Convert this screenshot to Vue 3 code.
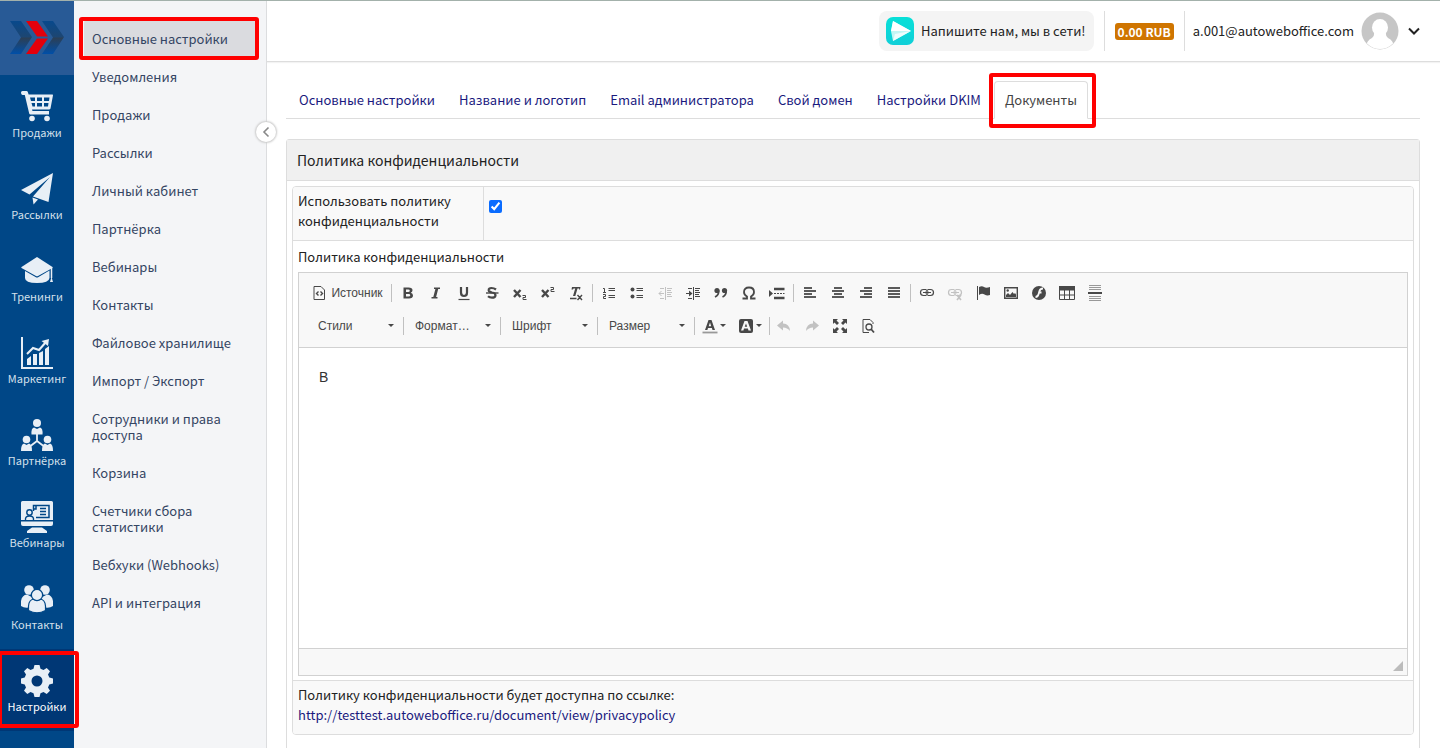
<script setup>
import { ref } from 'vue'

const agree = ref(true)
const content = ref('В')
const current = ref('Основные настройки')

const rail = [
  { label: 'Продажи', icon: 'cart' },
  { label: 'Рассылки', icon: 'plane' },
  { label: 'Тренинги', icon: 'cap' },
  { label: 'Маркетинг', icon: 'chart' },
  { label: 'Партнёрка', icon: 'team' },
  { label: 'Вебинары', icon: 'screen' },
  { label: 'Контакты', icon: 'people' },
  { label: 'Настройки', icon: 'gear', active: true }
]

const menu = [
  'Основные настройки', 'Уведомления', 'Продажи', 'Рассылки', 'Личный кабинет',
  'Партнёрка', 'Вебинары', 'Контакты', 'Файловое хранилище', 'Импорт / Экспорт',
  'Сотрудники и права доступа', 'Корзина', 'Счетчики сбора статистики',
  'Вебхуки (Webhooks)', 'API и интеграция'
]

const tabs = ['Основные настройки', 'Название и логотип', 'Email администратора', 'Свой домен', 'Настройки DKIM', 'Документы']

const K = '#484848'
const f = (d) => `<path d="${d}" fill="${K}"/>`
const s = (d, w = 1) => `<path d="${d}" fill="none" stroke="${K}" stroke-width="${w}"/>`

const railIcons = {
  cart: '<path d="M0 1.5Q0 0 1.500 0H5.500Q6.500 0 6.800 1L7.600 3.500H31.500Q32 3.500 32 4.200L29.500 17.500Q29.200 18.500 28 18.500H11L11.500 20H28V23.500H9.500Q8.500 23.500 8.200 22.500L3.800 4H1.500Q0 3.500 0 1.500Z"/><path d="M9 6.500H14V10H10ZM16 6.500H21V10H16ZM23 6.500H28.500L28 10H23ZM10.500 12H14V15.500H11.500ZM16 12H21V15.500H16ZM23 12H27.500L27 15.500H23Z" fill="#004787"/><circle cx="11" cy="27.500" r="2.800"/><circle cx="26" cy="27.500" r="2.800"/>',
  plane: '<path d="M32 0L0 17L8.500 21.500L29 4L12 23.500L27.500 29Z"/><path d="M11.500 24.500L17 26.500L12.500 31.500Z"/>',
  cap: '<path d="M16 2L31.500 12Q32 12.500 31.500 13L17 21Q16 21.500 15 21L0.500 13Q0 12.500 0.500 12Z"/><path d="M4 16L14.500 22Q16 23 17.500 22L28.500 15.500V23Q28 28 16 28T4 23Z"/><path d="M30.500 13V23" stroke="#e8eff6" stroke-width="1.500"/><path d="M30.500 22L32 27H29Z"/>',
  chart: '<path d="M0 0H2V30H32V32H0Z"/><path d="M6 22L10 19V28H6ZM12 17L16 17V28H12ZM18 16L22 14V28H18ZM24 12L28 9V28H24Z"/><path d="M6 17L12 11L18 13L25 5" fill="none" stroke="#e8eff6" stroke-width="2"/><path d="M20.500 4L28 2L27 9Z"/>',
  team: '<circle cx="16" cy="4" r="4"/><path d="M10.500 15.500Q10 9 13 8.500L16 10L19 8.500Q22 9 21.500 15.500Z"/><circle cx="5.500" cy="20.500" r="3.800"/><circle cx="26.500" cy="20.500" r="3.800"/><path d="M0 32Q0 25 3 24.500L5.500 26L8 24.500Q11 25 11 32ZM21 32Q21 25 24 24.500L26.500 26L29 24.500Q32 25 32 32Z"/><path d="M16 15V22L9.500 27M16 22L22.500 27" fill="none" stroke="#e8eff6" stroke-width="1.800"/>',
  screen: '<path d="M1.500 0H30.500Q32 0 32 1.500V19H0V1.500Q0 0 1.500 0ZM0 20.500H32V23Q32 25 30 25H2Q0 25 0 23ZM11 26.500H21L26 30V32H6V30Z"/><path d="M12.500 10V4.500H28V16.500H15M19 7.500H25M19 10.500H25M19 13.500H25M12.500 8H15V4.500" fill="none" stroke="#004787" stroke-width="1.500"/><circle cx="8.500" cy="11.500" r="2.700" fill="none" stroke="#004787" stroke-width="1.400"/><path d="M4.500 19Q4 15 8.500 15T12.500 19" fill="none" stroke="#004787" stroke-width="1.400"/>',
  people: '<circle cx="8" cy="7" r="4.800"/><circle cx="24" cy="7" r="4.800"/><path d="M0 23V18Q1 12 6 11.500L16 17L26 11.500Q31 12 32 18V23Q28 26 22 24H10Q4 26 0 23Z"/><g stroke="#004787" stroke-width="1.200"><path d="M7.500 27.500V23Q8 16.500 13 16H19Q24 16.500 24.500 23V27.500Q16 32 7.500 27.500Z"/><circle cx="16" cy="12" r="5.600"/></g>',
  gear: '<path fill-rule="evenodd" d="M13.500 0H18.500L19.500 3.800L22.500 5L25.700 3L29 6.300L27 9.500L28.300 12.500L32 13.500V18.500L28.300 19.500L27 22.500L29 25.700L25.700 29L22.500 27L19.500 28.300L18.500 32H13.500L12.500 28.300L9.500 27L6.300 29L3 25.700L5 22.500L3.700 19.500L0 18.500V13.500L3.700 12.500L5 9.500L3 6.300L6.300 3L9.500 5L12.500 3.800ZM16 10.500A5.500 5.500 0 1 0 16 21.500A5.500 5.500 0 1 0 16 10.500Z"/>'
}

const lines = (rows, w = 2) => rows.map(([x, y, l]) => `<path d="M${x} ${y}h${l}" stroke="${K}" stroke-width="${w}"/>`).join('')

const chain = s('M7 4.500H4.500Q1.500 4.500 1.500 7.500T4.500 10.500H7M9 4.500H11.500Q14.500 4.500 14.500 7.500T11.500 10.500H9M4 7.500H12', 1.2) + s('M7.500 4.500Q9 5 9 7.500T7.500 10.500M8.500 4.500Q7 5 7 7.500T8.500 10.500')

const icons = {
  source: s('M3 1.500H10L13.500 5V14.500H3Z') + s('M7.500 6.500L5.500 8.500L7.500 10.500M9.500 6.500L11.500 8.500L9.500 10.500', 1.4),
  bold: `<path fill-rule="evenodd" fill="${K}" d="M3.500 2.500H8.500Q12.500 2.500 12.500 5.300Q12.500 7.200 10.800 7.800Q13 8.300 13 10.500Q13 13.500 9 13.500H3.500ZM6 4.500V7H8Q9.800 7 9.800 5.700T8 4.500ZM6 9V11.500H8.300Q10.300 11.500 10.300 10.200T8.300 9Z"/>`,
  italic: f('M6 2.500H12V4H10.200L8.100 12H9.500V13.500H3.500V12H5.300L7.400 4H6Z'),
  underline: s('M5 2V7.500Q5 11 8 11T11 7.500V2', 2.2) + s('M2.500 14.500H13.500', 1.2),
  strike: s('M12 4.500Q10 3 7.500 3Q4.500 3 4.700 5.200Q5 7 8 7.500Q11.500 8 11.500 10.300Q11.300 12.700 8 12.700Q5.500 12.700 4 11.300', 2.2) + s('M2 8H14.500', 1.4),
  sub: s('M2 5L8.500 12M8.500 5L2 12', 2.4) + s('M10.500 10.500H13.500V12.500H11V14.500H14.500'),
  sup: s('M2 5L8.500 12M8.500 5L2 12', 2.4) + s('M10.500 2.500H13.500V4.500H11V6.500H14.500'),
  clear: f('M4 2H12.500L12 4.500H11L11.200 3.500H9.500L7.300 11H5L7.200 3.500H5.500L5 4.500H3.500Z') + s('M2 13.500H8.500M9.500 10L14 15M14 10L9.500 15', 1.4),
  numbered: s('M2 3.500H3.500V7M2 7.500H5M2 9.500H4.500V11.500H2.500V13.500H5M7.500 3.500H14M7.500 5.500H14M7.500 10.500H14M7.500 12.500H14'),
  bullets: `<circle cx="3.500" cy="4.500" r="2" fill="${K}"/><circle cx="3.500" cy="11.500" r="2" fill="${K}"/>` + s('M7.500 3.500H14M7.500 5.500H14M7.500 10.500H14M7.500 12.500H14'),
  outdent: s('M8.500 2V15M10 3.500H15M10 5.500H14M10 7.500H15M10 9.500H14M10 11.500H15M3 3.500H7M3 13.500H7M2 8.500H7M4.500 6L2 8.500L4.500 11'),
  indent: s('M8.500 2V15M10 3.500H15M10 5.500H14M10 7.500H15M10 9.500H14M10 11.500H15M3 3.500H7M3 13.500H7M1 8.500H6.500') + f('M4 5.500L7.500 8.500L4 11.500Z'),
  quote: `<g fill="${K}"><circle cx="4" cy="5.500" r="2.600"/><circle cx="11.500" cy="5.500" r="2.600"/></g>` + s('M5.700 5.500Q6 10 2 12M13.200 5.500Q13.500 10 9.500 12', 1.7),
  omega: s('M1.500 13.500H6V11.500Q3 10 3 7Q3 2.500 8 2.500T13 7Q13 10 10 11.500V13.500H14.500', 1.8),
  pagebreak: f('M0 5L4 8.500L0 12Z') + s('M5 4H15.500M5 13H15.500', 2.4) + s('M5 8.500H7M8 8.500H10M11 8.500H13M14 8.500H15.500'),
  left: lines([[2, 3, 8], [2, 6, 12], [2, 9, 8], [2, 12, 12]], 1.8),
  center: lines([[4, 3, 8], [2, 6, 12], [4, 9, 8], [2, 12, 12]], 1.8),
  right: lines([[6, 3, 8], [2, 6, 12], [6, 9, 8], [2, 12, 12]], 1.8),
  justify: lines([[2, 3, 12], [2, 6, 12], [2, 9, 12], [2, 12, 12]], 1.8),
  link: chain,
  unlink: chain + s('M10 10L14 15M14 10L10 15', 1.6),
  flag: s('M2.500 1V15') + f('M4 2Q7 0.500 9 2T15 2V10Q12 11 9.500 9.500T4 10Z'),
  image: s('M1.700 2.700H14.300V13.300H1.700Z', 1.4) + f('M3 12V10L5 8L7 10L9.500 7L11 9L12 8L13 9.500V12Z') + `<circle cx="4.700" cy="5.500" r="1.200" fill="${K}"/>`,
  flash: `<circle cx="8" cy="8" r="7" fill="${K}"/><path d="M12 3.500Q9 3.500 8.300 6.500L7.800 8.500Q7 12 4.500 12M7.500 7.500H10.500" fill="none" stroke="#f8f8f8" stroke-width="1.800"/>`,
  table: s('M0.500 2.500H15.500V14.500H0.500ZM5.500 5V14M10.500 5V14M1 10H15') + f('M0 1H16V5.500H0Z'),
  rule: `<path d="M2 0.500H14M2 2.500H14M2 4.500H14M2 11.500H14M2 13.500H14M2 15.500H14" stroke="#999" fill="none"/>` + s('M1 8H15', 2),
  undo: f('M1 7.500L7 2.500V5.500Q13.500 5.500 14 13Q11.500 9.500 7 9.500V12.500Z'),
  redo: f('M15 7.500L9 2.500V5.500Q2.500 5.500 2 13Q4.500 9.500 9 9.500V12.500Z'),
  maximize: f('M1 1H6L4.500 2.500L7 5L5 7L2.500 4.500L1 6ZM15 1V6L13.500 4.500L11 7L9 5L11.500 2.500L10 1ZM1 15V10L2.500 11.500L5 9L7 11L4.500 13.500L6 15ZM15 15H10L11.500 13.500L9 11L11 9L13.500 11.500L15 10Z'),
  preview: s('M13 6V4.500L10 1.500H3V14.500H9') + `<circle cx="9" cy="9" r="3" fill="none" stroke="${K}" stroke-width="1.300"/>` + s('M11 11L14 14.500', 1.8),
  color: f('M6.500 2H9.500L13 12H10.500L9.900 10H6L5.400 12H3ZM8 4.500L6.700 8.200H9.200Z') + '<path d="M0.500 14.500H15.500" stroke="#999" stroke-width="1.800"/>',
  bgcolor: `<rect x="1" y="1" width="14" height="14" rx="2" fill="${K}"/><path fill="#f8f8f8" fill-rule="evenodd" d="M6.500 3H9.500L13 12.500H10.500L9.900 10.500H6L5.400 12.500H3ZM8 5.500L6.700 8.700H9.200Z"/>`
}

const groups = [
  [['bold', 'Полужирный'], ['italic', 'Курсив'], ['underline', 'Подчеркнутый'], ['strike', 'Зачеркнутый'], ['sub', 'Подстрочный индекс'], ['sup', 'Надстрочный индекс'], ['clear', 'Убрать форматирование']],
  [['numbered', 'Нумерованный список'], ['bullets', 'Маркированный список'], ['outdent', 'Уменьшить отступ', true], ['indent', 'Увеличить отступ'], ['quote', 'Цитата'], ['omega', 'Специальный символ'], ['pagebreak', 'Разрыв страницы']],
  [['left', 'По левому краю'], ['center', 'По центру'], ['right', 'По правому краю'], ['justify', 'По ширине']],
  [['link', 'Ссылка'], ['unlink', 'Убрать ссылку', true], ['flag', 'Якорь'], ['image', 'Изображение'], ['flash', 'Flash'], ['table', 'Таблица'], ['rule', 'Горизонтальная линия']]
]

const combos = ['Стили', 'Формат…', 'Шрифт', 'Размер']
const tail = [['undo', 'Отменить', true], ['redo', 'Повторить', true], ['maximize', 'Развернуть'], ['preview', 'Предпросмотр']]
</script>

<template>
  <div class="app">
    <nav class="rail">
      <a href="#" class="logo" aria-label="Главная">
        <svg width="54" height="34" viewBox="0 0 54 34">
          <defs>
            <linearGradient id="blade" x1="0" y1="0" x2="0" y2="1">
              <stop offset="0" stop-color="#08498c" />
              <stop offset="0.48" stop-color="#1d4672" />
              <stop offset="0.52" stop-color="#2b3f56" />
              <stop offset="1" stop-color="#004fa8" />
            </linearGradient>
          </defs>
          <path d="M0 0H11L22 16L11 33H0L11 16.500Z" fill="url(#blade)" />
          <path d="M32 0H43L54 16L43 33H32L43 16.500Z" fill="url(#blade)" />
          <path d="M16 0H27L38 15.500H27ZM27 17.500H38L27 33H16Z" fill="#e3000b" />
        </svg>
      </a>
      <a v-for="r in rail" :key="r.label" href="#" class="rail-item" :class="{ active: r.active }">
        <svg width="32" height="32" viewBox="0 0 32 32" fill="#e8eff6" v-html="railIcons[r.icon]"></svg>
        <span>{{ r.label }}</span>
        <i v-if="r.active" class="mark mark-rail"></i>
      </a>
    </nav>

    <aside class="side">
      <a v-for="m in menu" :key="m" href="#" class="side-item" :class="{ active: m === current }" @click.prevent="current = m">
        {{ m }}
        <i v-if="m === menu[0]" class="mark mark-side"></i>
      </a>
      <button class="fold" aria-label="Свернуть меню">
        <svg width="8" height="12" viewBox="0 0 8 12"><path d="M6.500 1.500L2 6L6.500 10.500" fill="none" stroke="#888" stroke-width="1.600" /></svg>
      </button>
    </aside>

    <div class="main">
      <header class="top">
        <button class="chat">
          <svg width="28" height="28" viewBox="0 0 28 28">
            <defs>
              <linearGradient id="aqua" x1="0" y1="0" x2="0" y2="1"><stop offset="0" stop-color="#08e0d8" /><stop offset="1" stop-color="#10cfd8" /></linearGradient>
            </defs>
            <rect width="28" height="28" rx="7" fill="url(#aqua)" />
            <path d="M7 4L25 14L7 24L5 14Z" fill="#c4f6f4" />
            <path d="M7 4L25 14L5 14Z" fill="#fff" />
            <path d="M7 24L25 14L9 17Z" fill="#effdfd" />
          </svg>
          <span>Напишите нам, мы в сети!</span>
        </button>
        <div class="balance"><a href="#" class="badge">0.00 RUB</a></div>
        <button class="user">
          <span>a.001@autoweboffice.com</span>
          <svg class="avatar" width="38" height="38" viewBox="0 0 38 38">
            <defs><clipPath id="face"><circle cx="19" cy="19" r="18" /></clipPath></defs>
            <circle cx="19" cy="19" r="18.500" fill="#c6c6c6" />
            <g clip-path="url(#face)" fill="#fff">
              <ellipse cx="19" cy="15.500" rx="8" ry="8.500" />
              <path d="M13 18H25Q24 24 27 26Q33 28 33 38H5Q5 28 11 26Q14 24 13 18Z" />
            </g>
          </svg>
          <svg width="12" height="8" viewBox="0 0 12 8"><path d="M1 1.500L6 6.500L11 1.500" fill="none" stroke="#222" stroke-width="2" /></svg>
        </button>
      </header>

      <main class="page">
        <nav class="tabs">
          <a v-for="(t, i) in tabs" :key="t" href="#" class="tab" :class="{ active: i === 5 }">
            {{ t }}
            <i v-if="i === 5" class="mark mark-tab"></i>
          </a>
        </nav>

        <section class="panel">
          <h1>Политика конфиденциальности</h1>
          <div class="sheet">
            <div class="row row-check">
              <label for="agree">Использовать политику конфиденциальности</label>
              <div class="cell"><input id="agree" v-model="agree" type="checkbox" /></div>
            </div>
            <div class="row row-editor">
              <label for="policy">Политика конфиденциальности</label>
              <div class="editor">
                <div class="toolbar">
                  <div class="line">
                    <button class="tool source"><svg width="16" height="16" viewBox="0 0 16 16" v-html="icons.source"></svg>Источник</button>
                    <template v-for="(g, i) in groups" :key="i">
                      <span class="sep"></span>
                      <button v-for="b in g" :key="b[0]" class="tool" :disabled="b[2]" :aria-label="b[1]">
                        <svg width="16" height="16" viewBox="0 0 16 16" v-html="icons[b[0]]"></svg>
                      </button>
                    </template>
                  </div>
                  <div class="line second">
                    <template v-for="c in combos" :key="c">
                      <span class="combo">
                        <select :aria-label="c"><option>{{ c }}</option></select>
                        <span class="caret"></span>
                      </span>
                      <span class="sep"></span>
                    </template>
                    <button class="tool drop" aria-label="Цвет текста"><svg width="16" height="16" viewBox="0 0 16 16" v-html="icons.color"></svg><span class="caret"></span></button>
                    <button class="tool drop" aria-label="Цвет фона"><svg width="16" height="16" viewBox="0 0 16 16" v-html="icons.bgcolor"></svg><span class="caret"></span></button>
                    <span class="sep"></span>
                    <button v-for="b in tail" :key="b[0]" class="tool" :disabled="b[2]" :aria-label="b[1]">
                      <svg width="16" height="16" viewBox="0 0 16 16" v-html="icons[b[0]]"></svg>
                    </button>
                  </div>
                </div>
                <textarea id="policy" v-model="content"></textarea>
                <div class="foot"><span class="grip"></span></div>
              </div>
            </div>
            <div class="row row-link">
              Политику конфиденциальности будет доступна по ссылке:<br />
              <a href="#">http://testtest.autoweboffice.ru/document/view/privacypolicy</a>
            </div>
          </div>
        </section>
      </main>
    </div>
  </div>
</template>

<style>
body {
  overflow: hidden;
}
</style>

<style scoped>
.app {
  display: flex;
  height: 100vh;
  box-sizing: border-box;
  overflow: hidden;
  border-top: 1px solid #a3b1ab;
  background: #fff;
  color: #222;
  font: 400 13px/20px "Noto Sans CJK SC", "Noto Sans", sans-serif;
}
.app * {
  box-sizing: border-box;
}
a {
  color: #1a1a7e;
  text-decoration: none;
}
button {
  padding: 0;
  border: 0;
  background: none;
  color: inherit;
  font: inherit;
}
svg {
  display: block;
  flex: none;
}
.rail {
  flex: none;
  width: 74px;
  background: #004787;
}
.logo {
  display: flex;
  align-items: center;
  justify-content: center;
  height: 74px;
  background: #285a96;
}
.rail-item {
  position: relative;
  display: flex;
  flex-direction: column;
  align-items: center;
  height: 82px;
  padding-top: 16px;
  color: #d5e0eb;
  font-size: 11px;
  line-height: 18px;
}
.rail-item.active {
  z-index: 2;
  background: #003775;
  color: #fff;
}
.mark {
  position: absolute;
  border: 4px solid #f00;
  border-radius: 3px;
  pointer-events: none;
}
.mark-rail {
  inset: 2px -5px 3px -2px;
}
.mark-side {
  inset: -3px -3px -2px -5px;
}
.mark-tab {
  inset: -9px -9px -10px -6px;
}
.side {
  position: relative;
  flex: none;
  width: 193px;
  padding: 19px 10px;
  border-right: 1px solid #dcdddf;
  background: #f4f5f7;
}
.side-item {
  position: relative;
  display: block;
  padding: 11px 8px;
  border-radius: 3px;
  color: #344563;
  line-height: 16px;
}
.side-item.active {
  background: #dadbdf;
}
.fold {
  position: absolute;
  top: 121px;
  right: -10px;
  z-index: 2;
  display: flex;
  align-items: center;
  justify-content: center;
  width: 20px;
  height: 20px;
  border-radius: 50%;
  background: #fff;
  box-shadow: 0 0 2px 1px #ccc;
}
.main {
  flex: 1;
  min-width: 0;
}
.top {
  display: flex;
  align-items: center;
  justify-content: flex-end;
  height: 61px;
  padding-right: 20px;
  border-bottom: 1px solid #ddd;
  box-shadow: 0 1px 1px #f3f3f3;
}
.chat {
  display: flex;
  align-items: center;
  gap: 7px;
  height: 40px;
  margin-right: 10px;
  padding: 0 8px 0 7px;
  border-radius: 8px;
  background: #f4f4f4;
}
.balance {
  display: flex;
  align-items: center;
  height: 40px;
  margin-right: 8px;
  padding: 0 10px;
  border: solid #ddd;
  border-width: 0 1px;
}
.badge {
  padding: 0 3px;
  border-radius: 3px;
  background: #cf7500;
  color: #fff;
  font-size: 12px;
  font-weight: 700;
  line-height: 17px;
}
.user {
  display: flex;
  align-items: center;
}
.avatar {
  margin: 0 9px 0 7px;
}
.page {
  padding: 19px 20px 0 19px;
}
.tabs {
  display: flex;
  height: 38px;
  padding-left: 2px;
  border-bottom: 1px solid #ddd;
}
.tab {
  position: relative;
  height: 38px;
  margin-right: 2px;
  padding: 8px 10px;
  border: 1px solid transparent;
  white-space: nowrap;
}
.tab.active {
  border-color: #ddd #ddd #fff;
  border-radius: 4px 4px 0 0;
  background: #fff;
  color: #444;
}
.panel {
  height: 640px;
  margin-top: 20px;
  border: 1px solid #ddd;
  border-radius: 3px;
}
h1 {
  height: 41px;
  margin: 0;
  padding: 0 10px;
  border-bottom: 1px solid #ddd;
  background: #f0f0f0;
  font-size: 14px;
  font-weight: 400;
  line-height: 40px;
}
.sheet {
  margin: 5px;
  border: 1px solid #ddd;
  border-radius: 4px;
  overflow: hidden;
}
.row-check {
  display: flex;
  background: #f9f9f9;
}
.row-check label {
  width: 190px;
  padding: 4px 5px 9px;
}
.row-check .cell {
  flex: 1;
  padding: 13px 5px;
  border-left: 1px solid #ddd;
}
.row-check input {
  display: block;
  width: 13px;
  height: 13px;
  margin: 0;
  accent-color: #0a6cff;
}
.row-editor {
  padding: 6px 5px 4px;
  border: solid #ddd;
  border-width: 1px 0;
}
.row-editor label {
  display: block;
  height: 25px;
}
.editor {
  border: 1px solid #d1d1d1;
}
.toolbar {
  padding: 3px 6px 5px;
  border-bottom: 1px solid #d1d1d1;
  background: #f8f8f8;
}
.line {
  display: flex;
  align-items: center;
  height: 33px;
  color: #484848;
  font: 12px "Liberation Sans", Arial, sans-serif;
}
.tool {
  display: flex;
  align-items: center;
  justify-content: center;
  width: 28px;
  height: 28px;
}
.tool:disabled {
  opacity: 0.3;
}
.source {
  width: 84px;
  gap: 4px;
}
.drop {
  justify-content: flex-start;
  width: 36px;
  padding-left: 7px;
  gap: 2px;
}
.sep {
  width: 1px;
  height: 18px;
  margin: 0 2px;
  background: #c0c0c0;
}
.second {
  padding-left: 2px;
}
.second .sep {
  margin-right: 0;
}
.combo {
  display: flex;
  align-items: center;
  width: 94px;
  padding: 0 7px 0 11px;
}
.combo select {
  flex: 1;
  min-width: 0;
  padding: 0;
  border: 0;
  appearance: none;
  background: none;
  color: #484848;
  font: inherit;
}
.caret {
  border: 3px solid transparent;
  border-top-color: #484848;
  border-bottom: 0;
}
textarea {
  display: block;
  width: 100%;
  height: 300px;
  padding: 19px 20px;
  border: 0;
  outline: 0;
  resize: none;
  background: #fff;
  color: #333;
  font: 14px/20px "Liberation Sans", Arial, sans-serif;
}
.foot {
  display: flex;
  align-items: flex-end;
  justify-content: flex-end;
  height: 27px;
  padding: 4px;
  border-top: 1px solid #d1d1d1;
  background: #f8f8f8;
}
.grip {
  border: 5px solid #bcbcbc;
  border-top-color: transparent;
  border-left-color: transparent;
}
.row-link {
  padding: 4px 5px 9px;
  background: #f9f9f9;
}
</style>
